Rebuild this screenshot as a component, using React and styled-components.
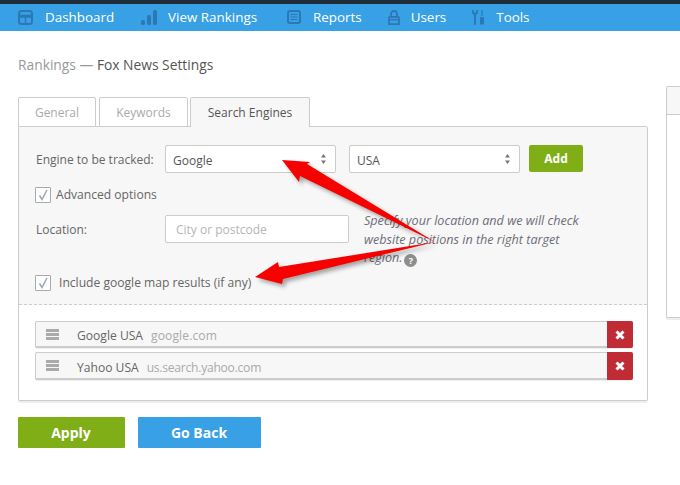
import React from "react";
import styled, { createGlobalStyle } from "styled-components";

const GlobalStyle = createGlobalStyle`
  html, body {
    margin: 0;
    padding: 0;
    background: #fff;
    overflow: hidden;
  }
  body {
    font-family: "Open Sans", "Noto Sans", sans-serif;
    color: #555;
  }
  * { box-sizing: border-box; }
`;

const Page = styled.div`
  position: relative;
  width: 680px;
  height: 485px;
  overflow: hidden;
`;

const Nav = styled.nav`
  display: flex;
  align-items: center;
  height: 31px;
  padding: 0 0 1px 18px;
  background: #38a0e4;
  border-top: 4px solid #1f2d3a;
`;

const NavItem = styled.div`
  display: flex;
  align-items: center;
  gap: ${(p) => p.$gap}px;
  margin-right: ${(p) => p.$right}px;
  color: #fff;
  font-size: 13.4px;
  font-weight: 500;
  svg { flex: none; display: block; }
`;

const Content = styled.main`
  padding: 26px 0 0 18px;
`;

const Heading = styled.h1`
  margin: 0 0 25px;
  font-size: 13.8px;
  line-height: 15px;
  font-weight: 400;
  color: #555;
  span { color: #999; }
`;

const Columns = styled.div`
  display: flex;
  gap: 18px;
`;

const Main = styled.div`
  width: 630px;
  flex: none;
`;

const Tabs = styled.div`
  display: flex;
  gap: 3px;
  height: 29px;
`;

const Tab = styled.div`
  width: ${(p) => p.$w}px;
  height: 30px;
  margin-right: ${(p) => p.$mr || 0}px;
  border: 1px solid #ccc;
  border-bottom: ${(p) => (p.$active ? "0" : "1px solid #ccc")};
  border-radius: 2px 2px 0 0;
  background: ${(p) => (p.$active ? "#f7f7f7" : "#fff")};
  color: ${(p) => (p.$active ? "#555" : "#aaa")};
  font-size: 12px;
  line-height: 29px;
  text-align: center;
  position: relative;
  z-index: 1;
`;

const Panel = styled.section`
  height: 275px;
  border: 1px solid #ccc;
  border-radius: 2px;
  box-shadow: 0 2px 0 #eee;
  background: #fff;
`;

const FormArea = styled.div`
  height: 178px;
  padding: 18px 16px 0 16px;
  background: #f7f7f7;
  border-bottom: 1px dashed #ccc;
`;

const Row = styled.div`
  display: flex;
  align-items: center;
`;

const EngineRow = styled(Row)`
  height: 28px;
`;

const Label = styled.label`
  width: 130px;
  flex: none;
  padding-left: 1px;
  font-size: 12px;
  color: #666;
`;

const SelectBox = styled.div`
  display: flex;
  align-items: center;
  justify-content: space-between;
  width: 171px;
  height: 28px;
  margin-right: ${(p) => p.$mr}px;
  padding: 2px 9px 0 7px;
  background: #fff;
  border: 1px solid #ccc;
  border-radius: 2px;
  font-size: 12px;
  color: #555;
  svg { display: block; margin-top: -2px; }
`;

const AddButton = styled.button`
  width: 54px;
  height: 27px;
  margin-top: -1px;
  padding: 0;
  border: 0;
  border-radius: 2px;
  background: #80ae17;
  color: #fff;
  font: 700 12px "Open Sans", sans-serif;
`;

const CheckRow = styled(Row)`
  gap: ${(p) => p.$gap}px;
  margin-top: ${(p) => p.$top}px;
  font-size: 12.1px;
  color: #666;
`;

const CheckLabel = styled.span`
  margin-top: -2px;
`;

const CheckBox = styled.span`
  display: flex;
  align-items: center;
  justify-content: center;
  width: 16px;
  height: 16px;
  flex: none;
  background: #fff;
  border: 1px solid #aaa;
  border-radius: 1px;
`;

const LocationRow = styled.div`
  display: flex;
  margin-top: 12px;
  height: 60px;
`;

const LocationLabel = styled(Label)`
  line-height: 30px;
`;

const TextInput = styled.div`
  width: 184px;
  height: 28px;
  flex: none;
  padding: 0 10px;
  background: #fff;
  border: 1px solid #ccc;
  border-radius: 2px;
  color: #b5b5b5;
  font-size: 12px;
  line-height: 27px;
`;

const Hint = styled.p`
  width: 232px;
  margin: -3px 0 0 15px;
  font-size: 12.6px;
  line-height: 18.5px;
  font-style: italic;
  color: #6d6d78;
`;

const HelpDot = styled.span`
  display: inline-block;
  width: 13px;
  height: 13px;
  margin-left: 2px;
  border-radius: 50%;
  background: #8e8e8e;
  color: #fff;
  font-size: 9px;
  font-style: normal;
  font-weight: 700;
  line-height: 13px;
  text-align: center;
  vertical-align: -2px;
`;

const EngineList = styled.div`
  display: flex;
  flex-direction: column;
  gap: 4px;
  padding: 16px 14px 0 16px;
`;

const EngineItem = styled.div`
  display: flex;
  align-items: center;
  height: ${(p) => p.$h}px;
  background: #f7f7f7;
  border: 1px solid #ccc;
  border-bottom-width: 2px;
  border-radius: 2px;
  box-shadow: 0 1px 0 #eee;
  font-size: 12.1px;
  color: #666;
  position: relative;
`;

const Grip = styled.span`
  display: flex;
  flex-direction: column;
  gap: 1px;
  width: 13px;
  margin: 0 18px 0 10px;
  i {
    display: block;
    height: 3px;
    background: #aaa;
  }
`;

const EngineText = styled.span`
  padding-top: 3px;
`;

const Domain = styled.span`
  margin-left: ${(p) => p.$ml}px;
  letter-spacing: ${(p) => p.$ls}px;
  color: #aaa;
`;

const RemoveButton = styled.button`
  display: flex;
  align-items: center;
  justify-content: center;
  width: 26px;
  align-self: stretch;
  margin: -1px -1px -2px auto;
  padding: 0;
  border: 0;
  border-radius: 0 2px 2px 0;
  background: #bf2c36;
  svg { display: block; }
`;

const Actions = styled.div`
  display: flex;
  gap: 13px;
  margin-top: 16px;
`;

const ActionButton = styled.button`
  width: ${(p) => p.$w}px;
  height: 31px;
  padding: 0 1px 0 0;
  border: 0;
  border-radius: 1px;
  background: ${(p) => p.$bg};
  color: #fff;
  font: 700 14px "Open Sans", sans-serif;
`;

const SidePanel = styled.aside`
  width: 40px;
  height: 232px;
  margin-top: -11px;
  flex: none;
  background: #fff;
  border: 1px solid #ccc;
  border-right: 0;
  border-radius: 2px 0 0 2px;
  box-shadow: 0 2px 0 #eee;
`;

const SideHead = styled.div`
  height: 28px;
  background: #f7f7f7;
  border-bottom: 1px solid #ccc;
`;

const ArrowLayer = styled.svg`
  position: absolute;
  left: 0;
  top: 0;
  pointer-events: none;
  filter: drop-shadow(3px 3px 2px rgba(0, 0, 0, 0.35));
`;

const icon = "#2b78b5";

const DashboardIcon = () => (
  <svg width="15" height="15" viewBox="0 0 15 15">
    <rect x="1" y="1" width="13" height="13" rx="2.500" fill="none" stroke={icon} strokeWidth="2" />
    <path d="M2 5.500h11M2 7h11M7.500 7v6" stroke={icon} strokeWidth="1.500" />
  </svg>
);

const RankingsIcon = () => (
  <svg width="16" height="15" viewBox="0 0 16 15">
    <rect x="0" y="10" width="4" height="5" rx="1.500" fill={icon} />
    <rect x="6" y="5" width="4" height="10" rx="1.500" fill={icon} />
    <rect x="12" y="0" width="4" height="15" rx="1.500" fill={icon} />
  </svg>
);

const ReportsIcon = () => (
  <svg width="14" height="14" viewBox="0 0 14 14">
    <rect x="1" y="1" width="12" height="12" rx="2" fill="none" stroke={icon} strokeWidth="2" />
    <path d="M3.500 4.500h7M3.500 7h7M3.500 9.500h7" stroke={icon} strokeWidth="1.200" />
  </svg>
);

const UsersIcon = () => (
  <svg width="12" height="15" viewBox="0 0 12 15">
    <path d="M3 6.500V4a3 3 0 0 1 6 0v2.500" fill="none" stroke={icon} strokeWidth="1.800" />
    <path d="M1.800 7h8.400c.5 0 .8.3.8.8v6.400H1V7.800c0-.5.3-.8.8-.8z" fill="none" stroke={icon} strokeWidth="1.800" />
    <path d="M1 9.700h10" stroke={icon} strokeWidth="1.400" />
  </svg>
);

const ToolsIcon = () => (
  <svg width="13" height="15" viewBox="0 0 13 15">
    <path d="M0 0v3l2 2v9a1 1 0 0 0 2 0V5l2-2V0L4.300 0v2.500H1.700V0z" fill={icon} />
    <path d="M10 0v6" stroke={icon} strokeWidth="1.200" />
    <path d="M8.500 7h3l.5 1v6.500h-4V8z" fill={icon} />
  </svg>
);

const SelectArrows = () => (
  <svg width="5" height="10" viewBox="0 0 5 10">
    <path d="M2.500 0L5 3.500H0zM2.500 10L0 6.500h5z" fill="#777" />
  </svg>
);

const Check = () => (
  <svg width="12" height="12" viewBox="0 0 12 12">
    <path d="M2.500 6.500L5 10.500 10 1" fill="none" stroke="#9aa6b4" strokeWidth="1.500" />
  </svg>
);

const Cross = () => (
  <svg width="10" height="10" viewBox="0 0 10 10">
    <path d="M1.500 1.500l7 7M8.500 1.500l-7 7" stroke="#fff" strokeWidth="3" />
  </svg>
);

const navItems = [
  { label: "Dashboard", Icon: DashboardIcon, gap: 12, right: 27 },
  { label: "View Rankings", Icon: RankingsIcon, gap: 11, right: 30 },
  { label: "Reports", Icon: ReportsIcon, gap: 12, right: 26 },
  { label: "Users", Icon: UsersIcon, gap: 11, right: 26 },
  { label: "Tools", Icon: ToolsIcon, gap: 11, right: 0 },
];

const engines = [
  { name: "Google USA", domain: "google.com", ml: 8, ls: 0.1, h: 27 },
  { name: "Yahoo USA", domain: "us.search.yahoo.com", ml: 8, ls: -0.25, h: 28 },
];

const App = () => {
  return (
    <Page>
      <GlobalStyle />
      <Nav>
        {navItems.map(({ label, Icon, gap, right }) => (
          <NavItem key={label} $gap={gap} $right={right}>
            <Icon />
            {label}
          </NavItem>
        ))}
      </Nav>

      <Content>
        <Heading>
          <span>Rankings — </span>Fox News Settings
        </Heading>

        <Columns>
          <Main>
            <Tabs>
              <Tab $w={78}>General</Tab>
              <Tab $w={89} $mr={-1}>Keywords</Tab>
              <Tab $w={120} $active>Search Engines</Tab>
            </Tabs>
            <Panel>
              <FormArea>
                <EngineRow>
                  <Label>Engine to be tracked:</Label>
                  <SelectBox $mr={13}>
                    Google
                    <SelectArrows />
                  </SelectBox>
                  <SelectBox $mr={9}>
                    USA
                    <SelectArrows />
                  </SelectBox>
                  <AddButton>Add</AddButton>
                </EngineRow>

                <CheckRow $gap={5} $top={14}>
                  <CheckBox>
                    <Check />
                  </CheckBox>
                  <CheckLabel>Advanced options</CheckLabel>
                </CheckRow>

                <LocationRow>
                  <LocationLabel>Location:</LocationLabel>
                  <TextInput>City or postcode</TextInput>
                  <Hint>
                    Specify your location and we will check website positions
                    in the right target region.
                    <HelpDot>?</HelpDot>
                  </Hint>
                </LocationRow>

                <CheckRow $gap={8} $top={0}>
                  <CheckBox>
                    <Check />
                  </CheckBox>
                  <CheckLabel>Include google map results (if any)</CheckLabel>
                </CheckRow>
              </FormArea>

              <EngineList>
                {engines.map((engine) => (
                  <EngineItem key={engine.name} $h={engine.h}>
                    <Grip>
                      <i />
                      <i />
                      <i />
                    </Grip>
                    <EngineText>
                      {engine.name}
                      <Domain $ml={engine.ml} $ls={engine.ls}>{engine.domain}</Domain>
                    </EngineText>
                    <RemoveButton>
                      <Cross />
                    </RemoveButton>
                  </EngineItem>
                ))}
              </EngineList>
            </Panel>

            <Actions>
              <ActionButton $w={107} $bg="#80ae17">Apply</ActionButton>
              <ActionButton $w={123} $bg="#38a0e4">Go Back</ActionButton>
            </Actions>
          </Main>

          <SidePanel>
            <SideHead />
          </SidePanel>
        </Columns>
      </Content>

      <ArrowLayer width="680" height="485" viewBox="0 0 680 485">
        <polygon
          points="282,160 310,162 307,164 435,242 300,176 299,182"
          fill="#f70000"
        />
        <polygon
          points="255,277 278,262 279,267 435,242 283,279 282,284"
          fill="#f70000"
        />
      </ArrowLayer>
    </Page>
  );
};

export default App;
